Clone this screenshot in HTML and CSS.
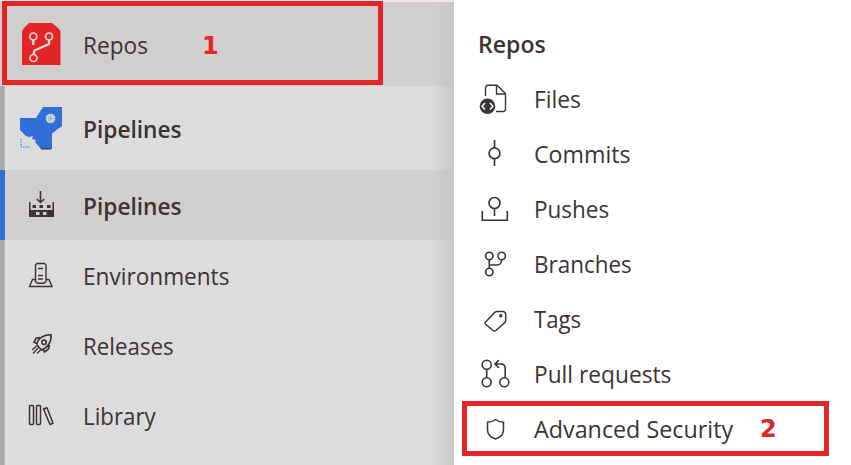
FILE: index.html
```
<!DOCTYPE html>
<html lang="en">
<head>
<meta charset="utf-8">
<title>Repos</title>
<link rel="stylesheet" href="styles.css">
</head>
<body>
<div class="app">
  <nav class="sidebar">
    <a class="row hub current callout-row">
      <svg class="icon" viewBox="17 20 48 48"><path fill="#e42528" d="M22 31l2-3 5-5h23l6 5 2.500 3v34H22z"/><g fill="none" stroke="#dedad8" stroke-width="1.700"><circle cx="33.300" cy="36.500" r="3.500"/><circle cx="49" cy="36.500" r="3.500"/><circle cx="33.500" cy="58" r="3.500"/><path stroke-width="2.300" d="M33.300 40v5M49 40v4l-14.500 6.500-1 4"/></g></svg>
      <span class="label t-repos">Repos</span><b class="step">1</b>
    </a>
    <a class="row hub">
      <svg class="icon" viewBox="17 104 48 48"><path fill="#306fd7" d="M20 118h16l7-11h19v19l-10 7.500v15.500H41l-6-7 1-2-4-1 1-3-4 1-3-1-6-6z"/><circle cx="50.500" cy="118.500" r="4.800" fill="#d4d5d5"/><path d="M50.500 114v9M46 118.500h9M47.500 115.500l6 6M53.500 115.500l-6 6" stroke="#7f9fd6" stroke-width=".5"/><path d="M21 139v8h9" fill="none" stroke="#306fd7" stroke-dasharray="1.500 1"/><path d="M41 149h10" stroke="#25334f"/></svg>
      <span class="label strong t-pipe">Pipelines</span>
    </a>
    <a class="row selected">
      <svg class="icon" viewBox="17 181 48 48"><path fill="none" stroke="#3c3335" stroke-width="1.600" d="M40.500 191v11M36.800 199l3.700 3.500 3.700-3.500"/><path fill="#3c3335" fill-rule="evenodd" d="M29 202h1.500v8h22v-8H54v15H29zM36 212v3h3.500v-3zM43 212v3h3.500v-3z"/><path fill="#3c3335" d="M32.500 205H36v3h-3.500zM39.500 205H43v3h-3.500zM47 205h3.500v3H47z"/></svg>
      <span class="label strong t-pipe">Pipelines</span>
    </a>
    <a class="row">
      <svg class="icon" viewBox="17 251 48 48"><g fill="none" stroke="#3c3335" stroke-width="1.400"><path d="M35.500 281.500V265l1.500-1.500h7.500l1.500 1.500v16.500l-2 1.800h-6.500zM35 279.500h-2.500L29.500 286.500H52l-3-7h-2.500"/><path d="M38 268.500h5M38 275.500h5M38 279h5"/></g></svg>
      <span class="label t-env">Environments</span>
    </a>
    <a class="row">
      <svg class="icon" viewBox="17 321 48 48"><g fill="none" stroke="#3c3335" stroke-width="1.600"><path d="M37 345c0-6 6-10.500 14-10.200.8 7-3.500 13.200-9.500 15.200zM40 337.500l-4 .8-2 4 3.500 1.500M49.500 345l-1 4-4 3-1.500-3"/><circle cx="44" cy="342.300" r="2.200"/><path d="M36.500 346l-4.500 4M38 348l-5 5.500M40.500 350l-3.500 3.500" stroke-width="1.300"/></g></svg>
      <span class="label t-rel">Releases</span>
    </a>
    <a class="row">
      <svg class="icon" viewBox="17 391 48 48"><g fill="none" stroke="#3c3335" stroke-width="1.500"><rect x="29.500" y="405.500" width="4" height="19" rx="1"/><rect x="36.500" y="405.500" width="4" height="19" rx="1"/><path d="M43.500 409l3.500-1.200 6 15.500-3 1.200z" stroke-linejoin="round"/></g></svg>
      <span class="label t-lib">Library</span>
    </a>
  </nav>
  <section class="flyout">
    <h2 class="title"><span class="label strong t-title">Repos</span></h2>
    <a class="item">
      <svg class="glyph" viewBox="478 81 36 36"><g fill="none" stroke="#3c3335" stroke-width="1.400"><path d="M485.500 95V86l1.500-1.700h10l8.500 8.200V109l-1.500 1.500h-8M496.500 84.500V93h9"/></g><circle cx="487.500" cy="105.300" r="7.800" fill="#3c3335"/><path d="M485 102l-3 3.300 3 3.300M490 102l3 3.300-3 3.300" fill="none" stroke="#fff" stroke-width="1.500"/></svg>
      <span class="label t-files">Files</span>
    </a>
    <a class="item">
      <svg class="glyph" viewBox="478 136 36 36"><g fill="none" stroke="#3c3335" stroke-width="1.700"><circle cx="494.500" cy="152.300" r="5.400"/><path d="M494.500 139v8M494.500 157.500v7.500"/></g></svg>
      <span class="label t-com">Commits</span>
    </a>
    <a class="item">
      <svg class="glyph" viewBox="478 191 36 36"><g fill="none" stroke="#3c3335" stroke-width="1.600"><circle cx="494.500" cy="202" r="5.500"/><path d="M494.500 207.500v7.500M482.300 210v9.300h25V210"/></g></svg>
      <span class="label t-push">Pushes</span>
    </a>
    <a class="item">
      <svg class="glyph" viewBox="478 246 36 36"><g fill="none" stroke="#3c3335" stroke-width="1.600"><circle cx="489.300" cy="255" r="3.700"/><circle cx="501.700" cy="255" r="3.700"/><circle cx="489.300" cy="271" r="3.700"/><path d="M489.300 259v8M489.300 264h8c3 0 4-1.500 4.400-5"/></g></svg>
      <span class="label t-bran">Branches</span>
    </a>
    <a class="item">
      <svg class="glyph" viewBox="478 301 36 36"><path d="M485.500 321l9.500-9.800 1.500-.7h7.300l1.900 1.900v7.100l-.8 2-9 8q-1.400 1-2.800 0l-7.400-6.300q-1.200-1.200-.2-2.200z" fill="none" stroke="#3c3335" stroke-width="1.500"/><circle cx="500.800" cy="314.700" r="1.700" fill="#3c3335"/></svg>
      <span class="label t-tags">Tags</span>
    </a>
    <a class="item">
      <svg class="glyph" viewBox="478 356 36 36"><g fill="none" stroke="#3c3335" stroke-width="1.600"><circle cx="486.700" cy="363.700" r="4.500"/><circle cx="486.700" cy="381.200" r="4.500"/><circle cx="504.300" cy="381.200" r="4.500"/><path d="M486.700 368.500v8M505.200 376.500V367.500q0-4.500-4.500-4.500h-5.500M499 359.200l-4 3.800 4 3.800"/></g></svg>
      <span class="label t-pull">Pull requests</span>
    </a>
    <a class="item callout-item">
      <svg class="glyph" viewBox="478 411 36 36"><path d="M495.500 418.500q-3.500 2.800-8 2.800v7.500q0 6.700 8 9.200 8-2.500 8-9.200v-7.500q-4.500 0-8-2.800z" fill="none" stroke="#3c3335" stroke-width="1.500"/></svg>
      <span class="label t-adv">Advanced Security</span><b class="step">2</b>
    </a>
  </section>
</div>
</body>
</html>
```
FILE: styles.css
```
*, *::before, *::after { box-sizing: border-box; }
body { margin: 0; background: #fff; overflow: hidden; font-family: "Open Sans", "Noto Sans", sans-serif; font-size: 24px; color: #3c3335; }
.app { display: flex; width: 851px; height: 465px; }
.sidebar { position: relative; width: 454px; padding-top: 2px; background: #dcdcdc; box-shadow: inset 0 2px #efe9e8; }
.sidebar::before { content: ""; position: absolute; left: 0; top: 86px; bottom: 0; width: 5px; background: linear-gradient(90deg, #aaa8a7, #aaa8a7 60%, #b9b8b7); }
.sidebar::after { content: ""; position: absolute; right: 0; top: 2px; bottom: 0; width: 24px; background: linear-gradient(90deg, transparent, #c8c7c6); }
.row { position: relative; display: flex; align-items: center; height: 70px; padding-left: 17px; }
.hub { height: 84px; }
.current, .selected { background: #d0cfcd; }
.selected::before { content: ""; position: absolute; left: 0; top: 0; width: 5px; height: 70px; background: #306fd7; }
.icon { width: 48px; height: 48px; margin-right: 18px; flex: none; }
.label { display: block; line-height: 32px; white-space: nowrap; transform-origin: 0 50%; }
.row .label { padding-top: 2px; }
.item .label, .title .label { padding-bottom: 2px; }
.strong { font-weight: 600; }
.t-repos { transform: scaleX(.945); }
.t-pipe { transform: scaleX(.945); }
.t-env { transform: scaleX(.942); }
.t-rel { transform: scaleX(.93); }
.t-lib { transform: scaleX(.93); }
.t-title { transform: scaleX(.962); }
.t-files { transform: scaleX(.95); }
.t-com { transform: scaleX(.965); }
.t-push { transform: scaleX(.937); }
.t-bran { transform: scaleX(.935); }
.t-tags { transform: scaleX(.925); }
.t-pull { transform: scaleX(.947); }
.t-adv { transform: scaleX(.971); }
.callout-row::after { content: ""; position: absolute; left: 2px; top: -1px; width: 381px; height: 84px; border: 5px solid #e42528; }
.callout-row .step { position: absolute; left: 202px; top: 28px; }
.step { font: bold 24px/32px "DejaVu Sans", sans-serif; color: #e42528; }
.flyout { width: 397px; padding-left: 24px; }
.title { display: flex; align-items: center; height: 55px; margin: 17px 0 0; font-size: 24px; }
.item { position: relative; display: flex; align-items: center; height: 55px; }
.glyph { width: 36px; height: 36px; margin-right: 20px; flex: none; }
.callout-item::after { content: ""; position: absolute; left: -16px; top: -1px; width: 367px; height: 55px; border: 5px solid #e42528; }
.callout-item .step { position: absolute; left: 282px; top: 11px; }
```
